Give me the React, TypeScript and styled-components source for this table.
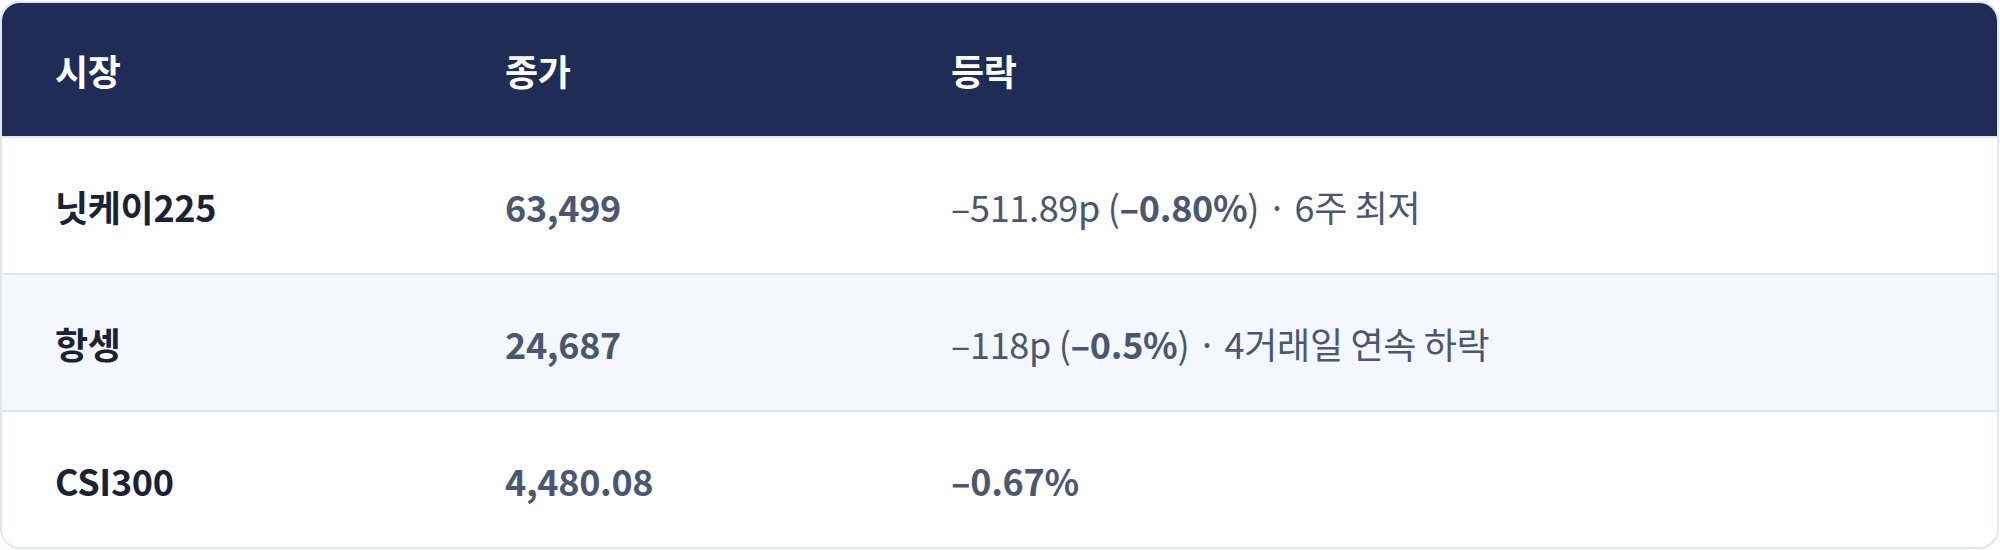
import React from "react";
import styled, { createGlobalStyle } from "styled-components";

interface MarketRow {
  market: string;
  close: string;
  change: React.ReactNode;
}

const GlobalStyle = createGlobalStyle`
  html, body {
    margin: 0;
    padding: 0;
    background: #ffffff;
  }
  body {
    font-family: "Noto Sans CJK KR", "Noto Sans", sans-serif;
    letter-spacing: -0.02em;
  }
`;

const Page = styled.div`
  width: 2000px;
  height: 550px;
  box-sizing: border-box;
  padding: 1px 1px 0 0;
`;

const Table = styled.div`
  border: 2px solid #dfe5f1;
  border-radius: 20px;
  overflow: hidden;
  background: #ffffff;
`;

const Row = styled.div<{ $head?: boolean; $alt?: boolean }>`
  display: grid;
  grid-template-columns: 450px 446px 1fr;
  align-items: center;
  height: ${(p) => (p.$head ? "133px" : "135px")};
  padding: 0 53px;
  background: ${(p) => (p.$head ? "#1f2c55" : p.$alt ? "#f4f7fc" : "#ffffff")};
  border-top: ${(p) => (p.$head ? "none" : "2px solid #dfe5f1")};
`;

const HeadCell = styled.div`
  color: #ffffff;
  font-size: 36px;
  font-weight: 700;
`;

const Market = styled.div`
  color: #1a2236;
  font-size: 36px;
  font-weight: 700;
`;

const Close = styled.div`
  color: #4a5672;
  font-size: 36px;
  font-weight: 700;
`;

const Change = styled.div`
  color: #4a5672;
  font-size: 36px;
  font-weight: 400;

  b {
    font-weight: 700;
  }
`;

const rows: MarketRow[] = [
  {
    market: "닛케이225",
    close: "63,499",
    change: (
      <>
        –511.89p (<b>–0.80%</b>) · 6주 최저
      </>
    ),
  },
  {
    market: "항셍",
    close: "24,687",
    change: (
      <>
        –118p (<b>–0.5%</b>) · 4거래일 연속 하락
      </>
    ),
  },
  {
    market: "CSI300",
    close: "4,480.08",
    change: <b>–0.67%</b>,
  },
];

const App: React.FC = () => {
  return (
    <Page>
      <GlobalStyle />
      <Table>
        <Row $head>
          <HeadCell>시장</HeadCell>
          <HeadCell>종가</HeadCell>
          <HeadCell>등락</HeadCell>
        </Row>
        {rows.map((row, index) => (
          <Row key={row.market} $alt={index % 2 === 1}>
            <Market>{row.market}</Market>
            <Close>{row.close}</Close>
            <Change>{row.change}</Change>
          </Row>
        ))}
      </Table>
    </Page>
  );
};

export default App;
